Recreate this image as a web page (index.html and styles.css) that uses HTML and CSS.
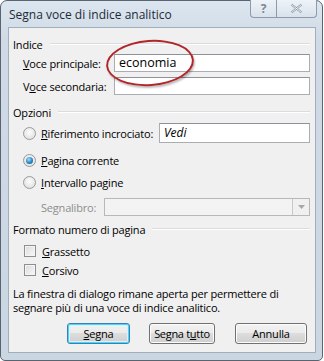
FILE: index.html
```html
<!DOCTYPE html>
<html lang="it">
<head>
<meta charset="utf-8">
<link rel="stylesheet" href="styles.css">
</head>
<body>
<div class="window">
  <div class="titlebar">
    <span class="title">Segna voce di indice analitico</span>
    <div class="caption">
      <div class="cbtn help">?</div>
      <div class="cbtn close">
        <svg width="13" height="11" viewBox="0 0 13 11"><path d="M1.5 1.5 L11.5 9.5 M11.5 1.5 L1.5 9.5" stroke="#8a96a4" stroke-width="2.2" fill="none"/><path d="M1.5 1.5 L11.5 9.5 M11.5 1.5 L1.5 9.5" stroke="#fff" stroke-width="0.8" fill="none"/></svg>
      </div>
    </div>
  </div>
  <div class="client">
    <div class="group"><span>Indice</span><i></i></div>
    <div class="row r-main">
      <label class="lbl w-main"><u>V</u>oce principale:</label>
      <div class="input">economia</div>
    </div>
    <div class="row r-sec">
      <label class="lbl w-main">V<u>o</u>ce secondaria:</label>
      <div class="input"></div>
    </div>
    <div class="group g2"><span>Opzioni</span><i></i></div>
    <div class="row r-rif">
      <span class="radio"></span>
      <label class="lbl w-rif"><u>R</u>iferimento incrociato:</label>
      <div class="input tall italic">Vedi</div>
    </div>
    <div class="row r-pag">
      <span class="radio on"></span>
      <label class="lbl"><u>P</u>agina corrente</label>
    </div>
    <div class="row r-int">
      <span class="radio"></span>
      <label class="lbl"><u>I</u>ntervallo pagine</label>
    </div>
    <div class="row r-seg">
      <label class="lbl dis w-seg">Segnalibro:</label>
      <div class="combo"><div class="drop"><svg width="7" height="4" viewBox="0 0 7 4"><path d="M0 0H7L3.5 4Z" fill="#a8a8a8"/></svg></div></div>
    </div>
    <div class="group g3"><span>Formato numero di pagina</span><i></i></div>
    <div class="row r-g">
      <span class="check"></span>
      <label class="lbl"><u>G</u>rassetto</label>
    </div>
    <div class="row r-c">
      <span class="check"></span>
      <label class="lbl"><u>C</u>orsivo</label>
    </div>
    <p class="note">La finestra di dialogo rimane aperta per permettere di segnare più di una voce di indice analitico.</p>
    <div class="buttons">
      <div class="btn def"><u>S</u>egna</div>
      <div class="btn mid">Segna t<u>u</u>tto</div>
      <div class="btn wide">Annulla</div>
    </div>
    <div class="ellipse"></div>
  </div>
</div>
</body>
</html>
```
FILE: styles.css
```css
html, body { margin: 0; padding: 0; background: #fff; }
body { width: 324px; height: 361px; overflow: hidden; }
.window {
  box-sizing: border-box;
  width: 323px; height: 361px;
  border: 1px solid #5a6470;
  border-radius: 7px 7px 5px 5px;
  background: linear-gradient(#dce6f0, #cfdae6 40px, #cad6e2);
  padding: 0 6px 7px 7px;
  font-family: "Open Sans", "Noto Sans", sans-serif;
  font-size: 11px;
  letter-spacing: -0.2px;
  color: #000;
}
.titlebar { height: 26px; display: flex; position: relative; }
.title { font-size: 12px; padding: 5px 0 0 1px; color: #1e2a36; letter-spacing: 0; }
.caption { position: absolute; right: -1px; top: -1px; display: flex; }
.cbtn {
  box-sizing: border-box; height: 18px;
  border: 1px solid #8e9aa8; border-top: none;
  background: linear-gradient(#eef3f8, #d8e2ec);
  display: flex; align-items: center; justify-content: center;
}
.help { width: 26px; border-radius: 0 0 0 4px; border-right: none; color: #7d8896; font-size: 12px; font-weight: bold; }
.close { width: 41px; border-radius: 0 0 4px 0; }
.client {
  position: relative;
  box-sizing: border-box;
  height: 326px;
  background: #f0f0f0;
  border: 1px solid #a2aebc;
  padding: 9px 5px 0 4px;
}
.group { display: flex; align-items: center; height: 14px; }
.group span { padding-right: 7px; }
.group i { flex: 1; height: 1px; background: #dcdcdc; border-bottom: 1px solid #fff; }
.row { display: flex; align-items: center; }
.lbl { white-space: nowrap; }
.w-main { width: 91px; padding-left: 10px; }
.input {
  box-sizing: border-box; flex: 1; height: 18px;
  background: #fff; border: 1px solid #abadb3; border-top-color: #8e9197;
  padding: 0 0 0 4px; line-height: 16px; font-size: 12.5px; letter-spacing: 0;
}
.r-main { margin-top: 3px; }
.r-sec { margin-top: 5px; }
.g2 { margin-top: 10px; }
.radio, .check {
  box-sizing: border-box; width: 13px; height: 13px; margin: 0 5px 0 10px; flex: none;
}
.radio {
  border-radius: 50%; border: 1px solid #9a9a9a;
  background: radial-gradient(circle at 50% 40%, #fcfcfc, #dadada);
  position: relative;
}
.radio.on::after {
  content: ""; position: absolute; left: 2px; top: 2px; width: 7px; height: 7px; border-radius: 50%;
  background: radial-gradient(circle at 40% 35%, #9fe0ff, #2a85c2 55%, #174f7a);
}
.check { width: 12px; height: 12px; margin-left: 11px; margin-right: 6px; border: 1px solid #8f8f8f; background: linear-gradient(135deg, #dcdcdc, #f8f8f8); box-shadow: inset 0 0 0 1px #f4f4f4; }
.r-rif { margin-top: 4px; }
.w-rif { width: 118px; }
.input.tall { height: 20px; line-height: 18px; font-size: 12px; }
.italic { font-style: italic; }
.r-pag { margin-top: 9px; height: 16px; }
.r-int { margin-top: 6px; height: 16px; }
.r-seg { margin-top: 8px; }
.w-seg { width: 63px; padding-left: 28px; }
.dis { color: #8d8d8d; }
.combo {
  box-sizing: border-box; flex: 1; height: 18px; border: 1px solid #b8b8b8; background: #f3f3f3;
  display: flex; justify-content: flex-end;
}
.drop { width: 16px; border-left: 1px solid #c8c8c8; display: flex; align-items: center; justify-content: center; background: #f0f0f0; }
.g3 { margin-top: 6px; }
.r-g { margin-top: 7px; height: 16px; }
.r-c { margin-top: 3px; height: 16px; }
.note { margin: 9px 0 0 0; line-height: 14px; width: 285px; }
.buttons { display: flex; justify-content: flex-end; margin-top: 8px; padding-right: 3px; }
.btn {
  box-sizing: border-box; width: 63px; height: 21px; border: 1px solid #707070; border-radius: 3px;
  background: linear-gradient(#f2f2f2 0, #ebebeb 45%, #dddddd 50%, #cfcfcf);
  display: flex; align-items: center; justify-content: center;
  box-shadow: inset 0 0 0 1px #fcfcfc;
  margin-left: 20px;
}
.btn.mid { width: 66px; letter-spacing: -0.3px; margin-left: 19px; }
.btn.def { border-color: #3c7fb1; box-shadow: inset 0 0 0 1px #48d5f8, inset 0 0 0 2px #d8f2fc; }
.btn.wide { width: 72px; }
.ellipse {
  position: absolute; left: 97px; top: 12px; width: 84px; height: 42px;
  border: 2px solid #b0262a; border-radius: 50%;
  transform: rotate(-4deg);
  box-shadow: 1px 2px 2px rgba(0,0,0,0.25);
}
```
